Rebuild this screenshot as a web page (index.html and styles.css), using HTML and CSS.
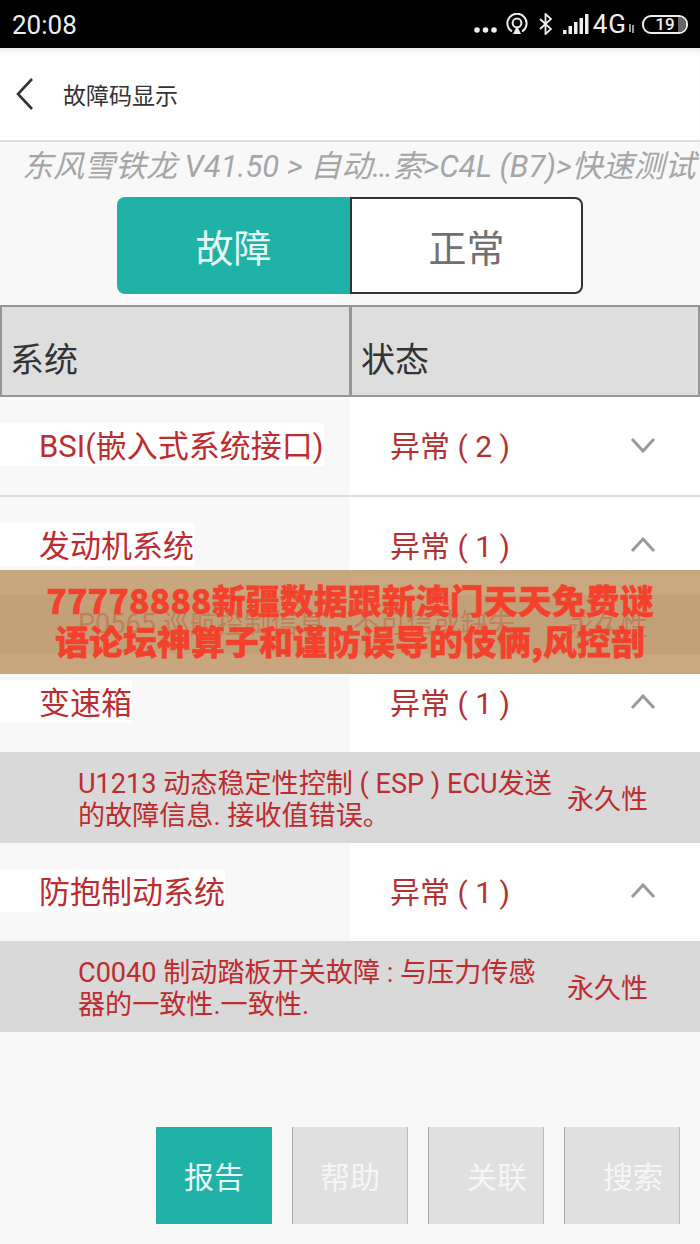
FILE: index.html
```html
<!DOCTYPE html>
<html lang="zh-CN">
<head>
<meta charset="utf-8">
<title>故障码显示</title>
<link rel="stylesheet" href="styles.css">
</head>
<body>
<div class="page">
  <div class="status">
    <span class="time">20:08</span>
    <div class="status-icons">
      <svg class="ic-dots" width="23" height="6" viewBox="0 0 23 6"><circle cx="3" cy="3" r="2.8"/><circle cx="11.5" cy="3" r="2.8"/><circle cx="20" cy="3" r="2.8"/></svg>
      <svg class="ic-cast" width="22" height="22" viewBox="0 0 22 22"><path d="M6 18.5A9.6 9.6 0 1 1 16 18.5" fill="none" stroke="#eee" stroke-width="2"/><circle cx="11" cy="10" r="4.4" fill="none" stroke="#eee" stroke-width="2"/><path d="M11 13l4 8H7z" fill="#eee"/></svg>
      <svg class="ic-bt" width="13" height="22" viewBox="0 0 13 22"><path d="M1 6l11 10-5.500 5V1l5.500 5L1 16" fill="none" stroke="#eee" stroke-width="1.800"/></svg>
      <svg class="ic-signal" width="26" height="20" viewBox="0 0 26 20"><rect x="0" y="16" width="3.500" height="4"/><rect x="5.500" y="12" width="3.500" height="8"/><rect x="11" y="8" width="3.500" height="12"/><rect x="16.500" y="4" width="3.500" height="16"/><rect x="22" y="0" width="3.500" height="20"/></svg>
      <span class="net">4G</span>
      <svg class="ic-arrows" width="7" height="9" viewBox="0 0 7 9"><path d="M2 0v8M5 1v8" stroke="#ccc" stroke-width="1.500"/></svg>
      <div class="battery"><span class="battery-num">19</span><span class="battery-end"></span></div>
    </div>
  </div>

  <div class="header">
    <svg class="back" width="20" height="34" viewBox="0 0 20 34"><path d="M17 2L3 17l14 15" fill="none" stroke="#333" stroke-width="2.600"/></svg>
    <span class="header-title">故障码显示</span>
  </div>

  <div class="crumb">东风雪铁龙 V41.50 &gt; 自动…索&gt;C4L (B7)&gt;快速测试</div>

  <div class="segment">
    <div class="seg seg-on">故障</div>
    <div class="seg seg-off">正常</div>
  </div>

  <div class="thead">
    <div class="th">系统</div>
    <div class="th">状态</div>
  </div>

  <div class="row row-line">
    <div class="cell-name"><span class="name">BSI(嵌入式系统接口)</span></div>
    <div class="cell-state"><span class="state">异常 ( 2 )</span>
      <svg class="chev" width="26" height="16" viewBox="0 0 26 16"><path d="M2 2l11 12L24 2" fill="none" stroke="#9a9a9a" stroke-width="3"/></svg>
    </div>
  </div>

  <div class="row">
    <div class="cell-name"><span class="name">发动机系统</span></div>
    <div class="cell-state"><span class="state">异常 ( 1 )</span>
      <svg class="chev" width="26" height="16" viewBox="0 0 26 16"><path d="M2 14L13 2l11 12" fill="none" stroke="#9a9a9a" stroke-width="3"/></svg>
    </div>
  </div>
  <div class="detail detail-short">
    <div class="detail-text">P0565 巡航控制信息：不可信或缺失</div>
    <div class="detail-kind">永久性</div>
  </div>

  <div class="row">
    <div class="cell-name"><span class="name">变速箱</span></div>
    <div class="cell-state"><span class="state">异常 ( 1 )</span>
      <svg class="chev" width="26" height="16" viewBox="0 0 26 16"><path d="M2 14L13 2l11 12" fill="none" stroke="#9a9a9a" stroke-width="3"/></svg>
    </div>
  </div>
  <div class="detail">
    <div class="detail-text">U1213 动态稳定性控制 ( ESP ) ECU发送的故障信息. 接收值错误。</div>
    <div class="detail-kind">永久性</div>
  </div>

  <div class="row">
    <div class="cell-name"><span class="name">防抱制动系统</span></div>
    <div class="cell-state"><span class="state">异常 ( 1 )</span>
      <svg class="chev" width="26" height="16" viewBox="0 0 26 16"><path d="M2 14L13 2l11 12" fill="none" stroke="#9a9a9a" stroke-width="3"/></svg>
    </div>
  </div>
  <div class="detail">
    <div class="detail-text">C0040 制动踏板开关故障 : 与压力传感器的一致性.一致性.</div>
    <div class="detail-kind">永久性</div>
  </div>

  <div class="actions">
    <div class="btn btn-on">报告</div>
    <div class="btn">帮助</div>
    <div class="btn btn-shift">关联</div>
    <div class="btn btn-shift">搜索</div>
  </div>

  <div class="banner">77778888新疆数据跟新澳门天天免费谜<br>语论坛神算子和谨防误导的伎俩,风控剖</div>
</div>
</body>
</html>
```
FILE: styles.css
```css
* { box-sizing: border-box; }
html, body { margin: 0; padding: 0; }
body { background: #f8f8f8; }
.page {
  position: relative;
  width: 700px;
  height: 1244px;
  overflow: hidden;
  background: #f8f8f8;
  font-family: Roboto, "Noto Sans CJK SC", sans-serif;
}

.status {
  height: 48px;
  background: #000;
  color: #eee;
  display: flex;
  align-items: center;
  justify-content: space-between;
  padding: 0 12px;
}
.time { font-size: 26px; padding-top: 2px; }
.status-icons { display: flex; align-items: center; }
.status-icons svg { fill: #eee; display: block; }
.ic-dots { margin-top: 12px; }
.ic-cast { margin-left: 9px; }
.ic-bt { margin-left: 11px; }
.ic-signal { margin-left: 11px; }
.net { font-size: 26px; margin-left: 4px; line-height: 26px; letter-spacing: 1px; }
.ic-arrows { margin: 8px 0 0 1px; }
.battery {
  width: 46px;
  height: 19px;
  margin-left: 7px;
  border: 2px solid #eee;
  border-radius: 9px;
  display: flex;
  align-items: center;
  justify-content: center;
  position: relative;
  overflow: hidden;
}
.battery-num { font-size: 17px; font-weight: 500; line-height: 17px; }
.battery-end { position: absolute; right: 0; top: 0; bottom: 0; width: 8px; background: #666; }

.header {
  height: 94px;
  background: #fff;
  border-bottom: 2px solid #ddd;
  box-shadow: inset 0 6px 6px -4px #e4e4e4;
  display: flex;
  align-items: center;
  padding-left: 15px;
}
.header-title { margin-left: 28px; font-size: 23px; color: #333; }

.crumb {
  height: 55px;
  padding-left: 22px;
  font-size: 31px;
  line-height: 50px;
  font-style: italic;
  color: #a6a6a6;
  white-space: nowrap;
  overflow: hidden;
}

.segment { width: 466px; height: 97px; margin: 0 0 11px 117px; display: flex; }
.seg { width: 50%; display: flex; align-items: center; justify-content: center; font-size: 38px; }
.seg-on { background: #20b2a6; color: #e8f8f6; border-radius: 8px 0 0 8px; }
.seg-off {
  background: #fff;
  color: #707070;
  border: 2px solid #333;
  border-radius: 0 8px 8px 0;
}

.thead { display: grid; grid-template-columns: 349px 351px; height: 92px; }
.th {
  background: #dedede;
  border: 2px solid #969696;
  border-right-width: 0;
  color: #333;
  font-size: 34px;
  padding: 28px 0 0 8px;
  line-height: 50px;
}
.th + .th { padding-left: 9px; border-left-width: 3px; border-right-width: 2px; }

.row { display: grid; grid-template-columns: 350px 350px; height: 98px; }
.row-line { height: 100px; border-bottom: 2px solid #ddd; }
.cell-name { background: #f8f8f8; display: flex; align-items: center; }
.cell-state { background: #fff; display: flex; align-items: center; padding-left: 40px; position: relative; }
.name {
  background: #fff;
  color: #bd2c2e;
  font-size: 31px;
  line-height: 38px;
  padding: 5px 0 0 39px;
  margin-bottom: 4px;
  white-space: nowrap;
}
.state { color: #b5312f; font-size: 30px; white-space: nowrap; margin-bottom: 4px; }
.chev { position: absolute; left: 280px; top: 40px; }

.detail {
  height: 91px;
  background: #d9d9d9;
  display: flex;
  align-items: center;
  padding-left: 78px;
}
.detail-short { height: 60px; margin-top: -1px; }
.detail-text { width: 480px; margin: 4px 9px 0 0; color: #bd2c2e; font-size: 27.100px; line-height: 32px; }
.detail-short .detail-text { margin-top: 0; }
.detail-kind { color: #bd2c2e; font-size: 27px; white-space: nowrap; }

.actions {
  display: flex;
  justify-content: flex-end;
  gap: 20px;
  padding: 95px 20px 0 0;
}
.btn {
  width: 116px;
  height: 97px;
  padding-bottom: 2px;
  background: #e0e0e0;
  border-left: 1px solid #a8a8a8;
  border-right: 1px solid #bcbcbc;
  color: #f6f6f6;
  font-size: 30px;
  display: flex;
  align-items: center;
  justify-content: center;
}
.btn-on { background: #20b2a6; border: 0; color: #e8f8f6; }
.btn-shift { padding-left: 22px; }

.banner {
  position: absolute;
  left: 0;
  top: 570px;
  width: 700px;
  height: 104px;
  padding-top: 9px;
  background: rgba(189, 149, 100, 0.82);
  color: #f4412c;
  font-family: "Noto Sans CJK SC", sans-serif;
  font-weight: 900;
  font-size: 34px;
  line-height: 41px;
  text-align: center;
  white-space: nowrap;
  -webkit-text-stroke: 0.4px #f4412c;
}
```
